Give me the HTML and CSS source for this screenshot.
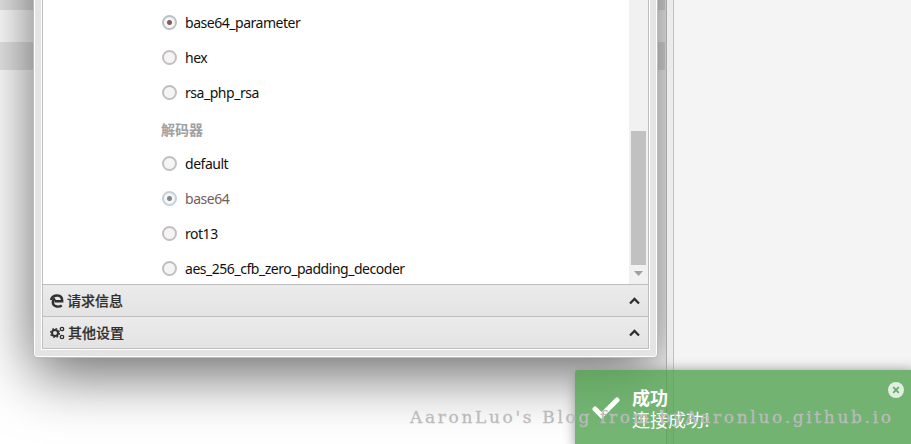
FILE: index.html
```html
<!DOCTYPE html>
<html lang="zh">
<head>
<meta charset="utf-8">
<title>Shell settings</title>
<link rel="stylesheet" href="styles.css">
</head>
<body>
<div class="workspace">
  <main class="list"><div class="row first"></div><div class="row"></div></main>
  <div class="splitter"></div>
  <aside class="side"></aside>
</div>
<section class="window">
  <div class="frame">
    <div class="content">
      <form class="form">
        <label class="option"><i class="radio checked"></i><span>base64_parameter</span></label>
        <label class="option"><i class="radio"></i><span>hex</span></label>
        <label class="option"><i class="radio"></i><span>rsa_php_rsa</span></label>
        <h3>解码器</h3>
        <label class="option"><i class="radio"></i><span>default</span></label>
        <label class="option active"><i class="radio checked"></i><span>base64</span></label>
        <label class="option"><i class="radio"></i><span>rot13</span></label>
        <label class="option"><i class="radio"></i><span>aes_256_cfb_zero_padding_decoder</span></label>
      </form>
      <div class="scrollbar"><div class="thumb"></div><svg width="9" height="5" viewBox="0 0 9 5"><path d="M0 0H9L4.5 5Z" fill="#a0a0a0"/></svg></div>
    </div>
    <div class="bar">
      <svg class="ico" width="14" height="14" viewBox="0 0 14 14" fill="none" stroke="#303030"><path d="M1 6C2 2 5 1.4 7.5 1.5C11 1.7 12.3 4 12.2 7.2H4.5" stroke-width="2.4"/><path d="M5.2 4.6C2 6 2 11 5.6 12.2C8 13 10.3 12.5 11.8 11.5" stroke-width="2.4"/></svg>
      <span>请求信息</span>
      <svg class="arrow" width="11" height="8" viewBox="0 0 11 8"><path d="M1 6.5L5.5 2L10 6.5" fill="none" stroke="#303030" stroke-width="2.3"/></svg>
    </div>
    <div class="bar">
      <svg class="ico" width="15" height="14" viewBox="0 0 15 14" fill="none" stroke="#303030"><circle cx="5" cy="7" r="3" stroke-width="2"/><circle cx="5" cy="7" r="4.5" stroke-width="1.2" stroke-dasharray="1.8 1.734"/><circle cx="12" cy="3" r="1.7" stroke-width="1.3"/><circle cx="12" cy="11" r="1.7" stroke-width="1.3"/></svg>
      <span>其他设置</span>
      <svg class="arrow" width="11" height="8" viewBox="0 0 11 8"><path d="M1 6.5L5.5 2L10 6.5" fill="none" stroke="#303030" stroke-width="2.3"/></svg>
    </div>
  </div>
</section>
<div class="toast">
  <svg class="check" width="28" height="22" viewBox="0 0 28 22"><path d="M3 12L9.5 18.5L25 3" fill="none" stroke="#fff" stroke-width="5" stroke-linecap="round"/></svg>
  <div class="message"><b>成功</b><p>连接成功!</p></div>
  <svg class="close" width="16" height="16" viewBox="0 0 16 16"><circle cx="8" cy="8" r="8" fill="#e0eee0"/><path d="M5.2 5.2L10.8 10.8M10.8 5.2L5.2 10.8" stroke="#68a868" stroke-width="1.7"/></svg>
</div>
<div class="watermark"><svg width="500" height="30"><text x="10" y="18" textLength="481">AaronLuo's Blog from byAaronluo.github.io</text></svg></div>
</body>
</html>
```

FILE: styles.css
```css
* { box-sizing: border-box; }
body { margin: 0; width: 911px; height: 444px; overflow: hidden; background: #fff; font-family: "Noto Sans", "Noto Sans CJK SC", sans-serif; }
.workspace { display: flex; height: 444px; }
.list { width: 666px; }
.row { width: 665px; height: 28px; background: #e6e6e6; margin-top: 32px; }
.row.first { height: 10px; margin-top: 0; }
.splitter { width: 8px; background: #ebebeb; border-left: 1px solid #a8a8a8; border-right: 1px solid #c0c0c0; z-index: 1; }
.side { flex: 1; background: #f4f4f4; z-index: 3; }
.window { position: absolute; left: 33px; top: -220px; width: 625px; height: 578px; padding: 0 8px 8px; border: 1px solid #bbb; border-radius: 4px; background: #e4e4e4; box-shadow: inset 0 0 0 1px #fff, 0 16px 60px rgba(0,0,0,.6); clip-path: inset(0 -8px -100px -60px); }
.frame { height: 100%; border: 1px solid #bebebe; border-top: 0; outline: 1px solid #fff; padding-top: 219px; }
.content { height: 284px; display: flex; justify-content: space-between; background: #fff; }
.form { padding: 5px 0 0 119px; color: #111; }
.option { display: flex; height: 35px; align-items: center; gap: 8px; }
.option span { font-size: 14px; letter-spacing: -.47px; margin-top: -1px; }
.radio { width: 15px; height: 15px; margin-top: -1px; border: 2px solid #c3bfc1; border-radius: 50%; background: #f5f5f5; }
.checked { border-color: #bcc0c8; background: radial-gradient(circle, #875b5d 0 2px, #f5f5f5 3px); }
.active { color: #775b5d; }
.active .radio { border-color: #c0d0dd; background: radial-gradient(circle, #858585 0 2px, #f5f5f5 3px); }
h3 { margin: 0 0 0 -1px; height: 36px; font: bold 14px/38px "Noto Sans CJK SC", sans-serif; color: #a0a0a0; }
.scrollbar { width: 19px; background: #f1f1f1; padding: 131px 2px 0; }
.thumb { width: 15px; height: 134px; background: #c1c1c1; }
.scrollbar svg { display: block; margin: 6px 0 0 3px; }
.bar { display: flex; align-items: center; height: 32px; border-top: 1px solid #bebebe; background: linear-gradient(#ebebeb, #e3e3e3); padding: 0 8px 0 7px; font: 500 14px "Noto Sans CJK SC", sans-serif; color: #303030; }
.bar .ico { margin-right: 3px; }
.bar span { margin-top: -2px; -webkit-text-stroke: .2px #303030; }
.arrow { margin-left: auto; }
.toast { position: absolute; left: 575px; top: 370px; width: 340px; height: 78px; border-radius: 3px; background: rgba(81,163,81,.8); box-shadow: 0 0 12px #999; z-index: 5; display: flex; color: #fff; padding: 16px 11px 0 17px; }
.check { margin-top: 11px; }
.message { margin-left: 12px; font: 18px/22px "Noto Sans CJK SC", sans-serif; }
.message p { margin: 0; }
.close { margin: -4px 0 0 auto; }
.watermark { position: absolute; left: 400px; top: 405px; z-index: 6; }
.watermark text { font: 17px "DejaVu Serif", serif; fill: #bbb; stroke: #bbb; stroke-width: .3px; }
```
